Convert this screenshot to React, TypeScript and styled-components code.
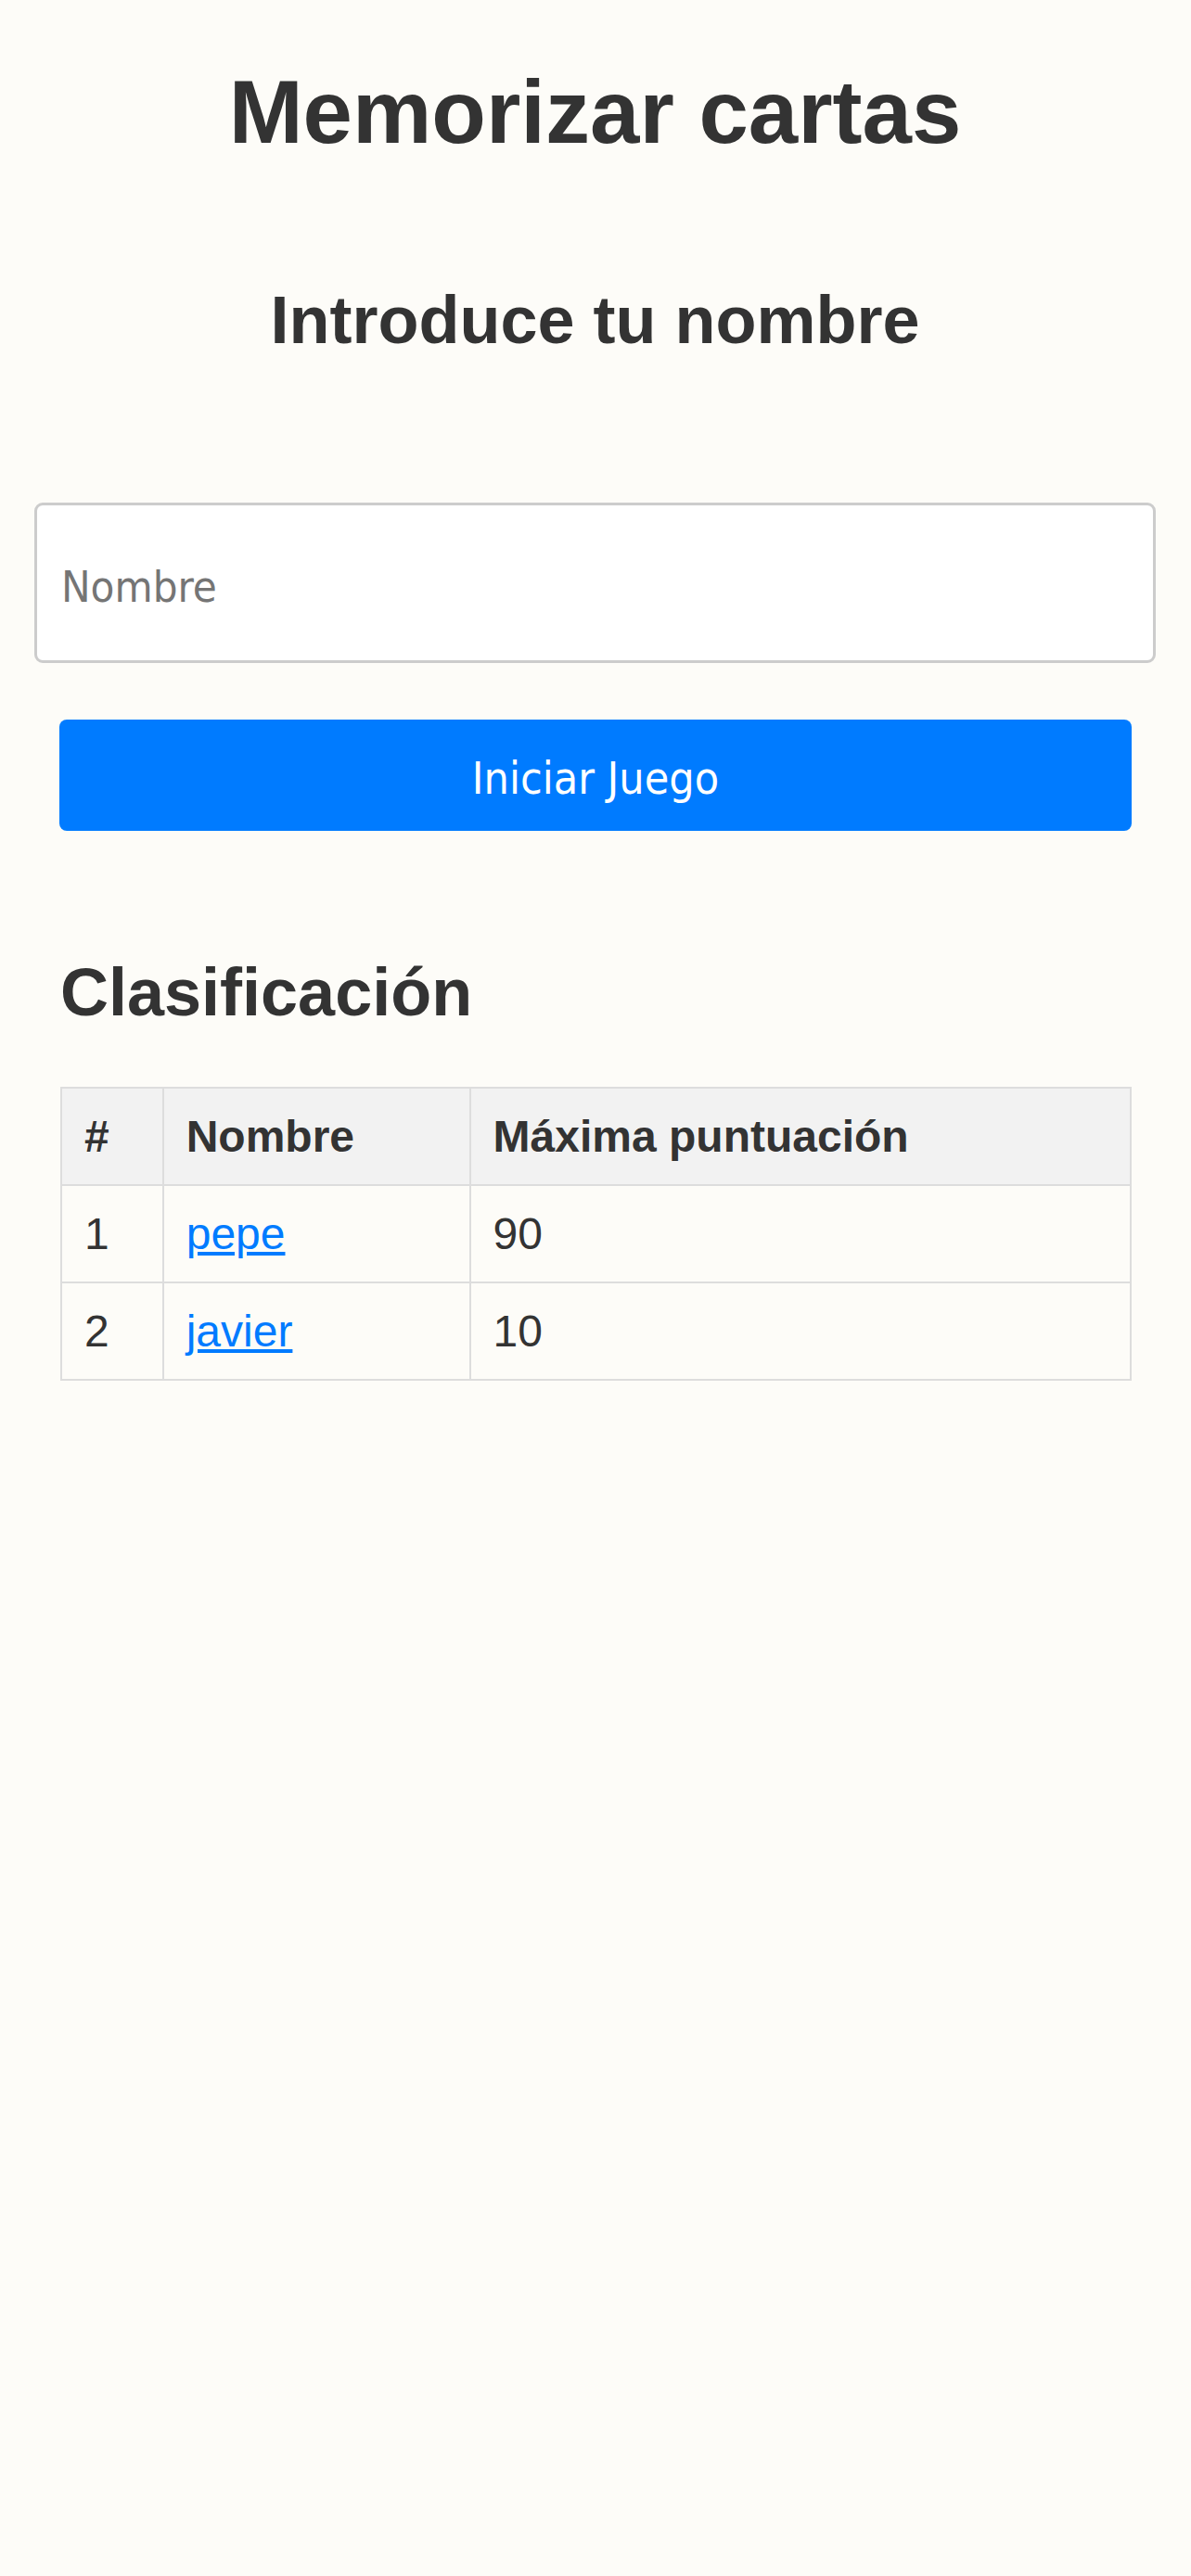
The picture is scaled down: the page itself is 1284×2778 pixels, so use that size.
import React from "react";
import styled, { createGlobalStyle } from "styled-components";

const GlobalStyle = createGlobalStyle`
  html, body {
    margin: 0;
    padding: 0;
    background: #fdfcf8;
  }
  body {
    font-family: "Liberation Sans", Arial, sans-serif;
    font-size: 48px;
    color: #333333;
  }
`;

const Page = styled.main`
  display: block;
  padding: 0 38px 120px 37px;
  min-height: 2778px;
  box-sizing: border-box;
`;

const Title = styled.h1`
  margin: 66px 0 0;
  font-size: 96px;
  font-weight: bold;
  line-height: normal;
  text-align: center;
`;

const Heading = styled.h2<{ $align?: "center" | "left"; $top: number }>`
  margin: ${(p) => p.$top}px ${(p) => (p.$align === "left" ? "26px 0 28px" : "0 0")};
  font-size: 72px;
  font-weight: bold;
  line-height: normal;
  text-align: ${(p) => p.$align ?? "center"};
`;

const NameInput = styled.input`
  display: block;
  margin: 156px 0 0;
  width: 100%;
  height: 173px;
  box-sizing: border-box;
  padding: 8px 24px 0 26px;
  border: 3px solid #cccccc;
  border-radius: 9px;
  background: #ffffff;
  font-family: "DejaVu Sans Condensed", "DejaVu Sans", sans-serif;
  font-size: 47px;
  color: #333333;
  outline: none;

  &::placeholder {
    color: #757575;
  }
`;

const StartButton = styled.button`
  display: block;
  margin: 61px 26px 0 27px;
  width: calc(100% - 53px);
  height: 120px;
  padding: 5px 0 0;
  border: none;
  border-radius: 8px;
  background: #007bff;
  color: #ffffff;
  font-family: "DejaVu Sans Condensed", "DejaVu Sans", sans-serif;
  font-size: 48px;
  cursor: pointer;
`;

const Board = styled.table`
  margin: 61px 26px 0 28px;
  width: calc(100% - 54px);
  border-collapse: collapse;
`;

const HeadCell = styled.th`
  padding: 24px;
  border: 2px solid #dddddd;
  background: #f2f2f2;
  text-align: left;
  font-weight: bold;
  line-height: normal;
`;

const Cell = styled.td`
  padding: 24px;
  border: 2px solid #dddddd;
  text-align: left;
  line-height: normal;
`;

const PlayerLink = styled.a`
  color: #007bff;
  text-decoration: underline;
`;

const players = [
  { pos: 1, name: "pepe", score: 90 },
  { pos: 2, name: "javier", score: 10 },
];

export default function App() {
  return (
    <>
      <GlobalStyle />
      <Page>
        <Title>Memorizar cartas</Title>
        <Heading $top={128}>Introduce tu nombre</Heading>
        <NameInput type="text" placeholder="Nombre" />
        <StartButton type="button">Iniciar Juego</StartButton>
        <Heading $top={133} $align="left">
          Clasificación
        </Heading>
        <Board>
          <thead>
            <tr>
              <HeadCell>#</HeadCell>
              <HeadCell>Nombre</HeadCell>
              <HeadCell>Máxima puntuación</HeadCell>
            </tr>
          </thead>
          <tbody>
            {players.map((p) => (
              <tr key={p.pos}>
                <Cell>{p.pos}</Cell>
                <Cell>
                  <PlayerLink href="#">{p.name}</PlayerLink>
                </Cell>
                <Cell>{p.score}</Cell>
              </tr>
            ))}
          </tbody>
        </Board>
      </Page>
    </>
  );
}
